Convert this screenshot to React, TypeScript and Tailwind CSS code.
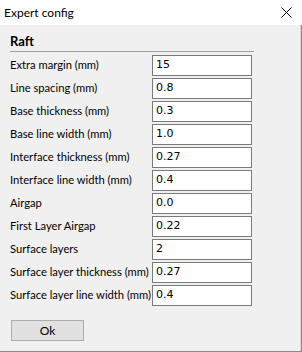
import React from 'react';

const rows: [string, string][] = [
  ['Extra margin (mm)', '15'],
  ['Line spacing (mm)', '0.8'],
  ['Base thickness (mm)', '0.3'],
  ['Base line width (mm)', '1.0'],
  ['Interface thickness (mm)', '0.27'],
  ['Interface line width (mm)', '0.4'],
  ['Airgap', '0.0'],
  ['First Layer Airgap', '0.22'],
  ['Surface layers', '2'],
  ['Surface layer thickness (mm)', '0.27'],
  ['Surface layer line width (mm)', '0.4'],
];

export default function App() {
  return (
    <div className="flex h-[352px] w-[302px] flex-col overflow-hidden bg-[#f0f0f0] font-['Lato',sans-serif] text-[11.2px] text-black">
      <div className="flex h-[25px] items-center justify-between bg-white pl-[4px] pr-[10px]">
        <span className="text-[12px]">Expert config</span>
        <svg width="11" height="11" viewBox="0 0 11 11" className="stroke-black">
          <path d="M0.5 0.5L10.5 10.5M10.5 0.5L0.5 10.5" strokeWidth="1" />
        </svg>
      </div>
      <div className="flex flex-1 border-r border-b border-[#8a8a8a]">
        <div className="flex flex-1 flex-col border-r border-[#d8d8d8] pl-[10px] pt-[8px]">
          <div className="w-[244px] border-b border-[#a0a0a0] pb-[1px] text-[13px] leading-[17px] font-bold">Raft</div>
          <div className="mt-[3px] flex flex-col gap-[2px]">
            {rows.map(([label, value]) => (
              <div key={label} className="flex h-[21px] items-center">
                <span className="w-[142px] whitespace-nowrap">{label}</span>
                <div className="flex h-[21px] w-[100px] items-center border border-[#7a7a7a] bg-white pl-[3px] font-['DejaVu_Sans',sans-serif] text-[11px]">
                  {value}
                </div>
              </div>
            ))}
          </div>
          <button className="mt-[14px] ml-[1px] h-[21px] w-[73px] border border-[#adadad] bg-[#e1e1e1] text-[12px] leading-none">
            Ok
          </button>
        </div>
      </div>
    </div>
  );
}
